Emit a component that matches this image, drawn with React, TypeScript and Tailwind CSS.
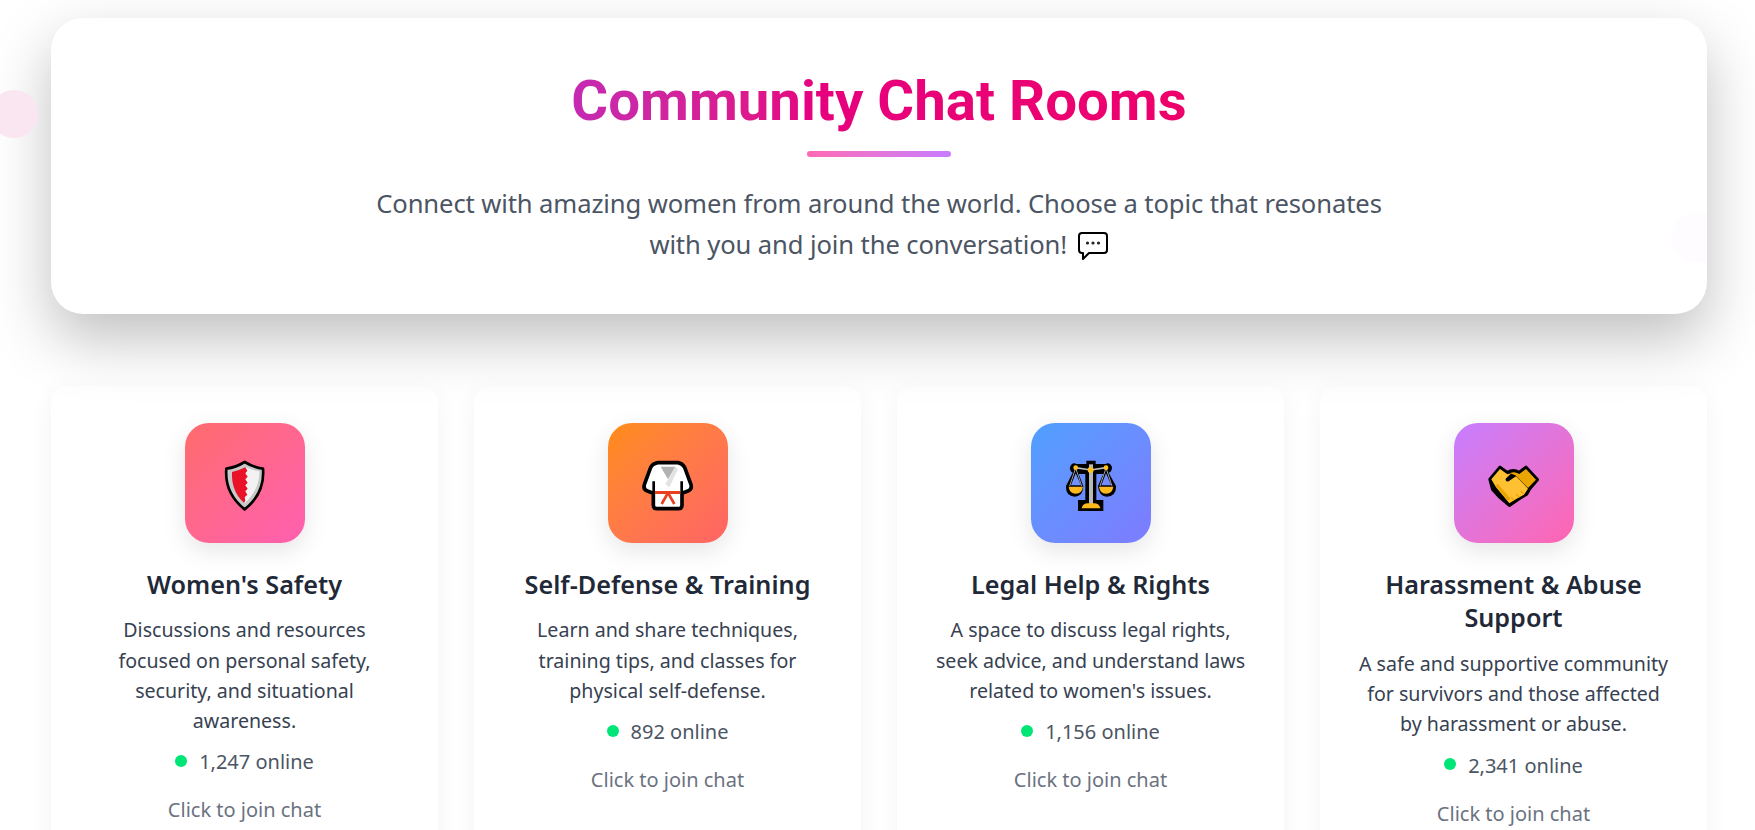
import React from "react";

const rooms = [
  {
    title: "Women's Safety",
    desc: "Discussions and resources focused on personal safety, security, and situational awareness.",
    online: "1,247",
    tile: "bg-gradient-to-br from-[#ff6b6b] to-[#ff5fb0]",
    icon: <ShieldIcon />,
  },
  {
    title: "Self-Defense & Training",
    desc: "Learn and share techniques, training tips, and classes for physical self-defense.",
    online: "892",
    tile: "bg-gradient-to-br from-[#ff8c0f] to-[#ff6464]",
    icon: <GiIcon />,
  },
  {
    title: "Legal Help & Rights",
    desc: "A space to discuss legal rights, seek advice, and understand laws related to women's issues.",
    online: "1,156",
    tile: "bg-gradient-to-br from-[#4d9fff] to-[#7d7bff]",
    icon: <ScalesIcon />,
  },
  {
    title: "Harassment & Abuse Support",
    desc: "A safe and supportive community for survivors and those affected by harassment or abuse.",
    online: "2,341",
    tile: "bg-gradient-to-br from-[#c77dff] to-[#ff64b0]",
    icon: <HandshakeIcon />,
  },
];

function ShieldIcon() {
  return (
    <svg viewBox="45 39 360 360" className="h-full w-full">
      <path d="M224 156Q250 172 279 176C283 225 262 268 224 298C186 268 165 225 169 176Q198 172 224 156Z" fill="#c9c9c9" stroke="#000" strokeWidth="8" strokeLinejoin="round" />
      <path d="M226 172Q246 181 268 184C269 222 252 254 224 280Z" fill="#f2f2f2" />
      <path d="M226 172L232 182L226 190L233 200L226 208L233 218L226 226L233 236L226 244L232 254L224 262L226 272L222 278C198 258 184 226 186 186Q206 182 226 172Z" fill="#ea1226" />
    </svg>
  );
}

function GiIcon() {
  return (
    <svg viewBox="40 39 360 360" className="h-full w-full">
      <path d="M190 158H250Q263 160 270 172L289 224Q293 238 280 243L262 250V286Q262 296 252 296H186Q176 296 176 286V250L158 243Q145 238 149 224L168 172Q175 160 190 158Z" fill="#fff" stroke="#000" strokeWidth="11" strokeLinejoin="round" />
      <path d="M198 170H242L220 208Z" fill="#b2b2b2" />
      <path d="M243 170L250 178L224 232L212 222Z" fill="#e2e2e2" />
      <path d="M177 214V250M261 214V250" stroke="#000" strokeWidth="8" />
      <rect x="181" y="243" width="76" height="9" fill="#e8401c" />
      <path d="M219 250L201 282M221 250L239 282" stroke="#e8401c" strokeWidth="8" />
    </svg>
  );
}

function ScalesIcon() {
  return (
    <svg viewBox="45 39 360 360" className="h-full w-full">
      <path d="M211 152H239V162H268Q282 154 288 172Q288 186 278 188L300 228Q302 258 272 260Q248 258 246 228L262 192H241V270H262V303H186V270H208V192H188L202 228Q202 258 176 260Q148 258 150 228L170 188Q160 184 162 172Q168 154 182 162H211Z" fill="#000" />
      <path d="M179 190L165 226H195Z" fill="#6f92ff" />
      <path d="M270 190L256 226H286Z" fill="#7589ff" />
      <path d="M179 174L161 228M179 174L197 228M270 174L252 228M270 174L288 228" stroke="#b9b9b9" strokeWidth="2.5" />
      <rect x="219" y="163" width="12" height="122" fill="#b9b9b9" />
      <path d="M178 173L224 180L270 173" stroke="#b9b9b9" strokeWidth="5" fill="none" />
      <circle cx="179" cy="173" r="7" fill="#ffc022" />
      <circle cx="270" cy="173" r="7" fill="#ffc022" />
      <circle cx="224" cy="180" r="9" fill="#ffc022" />
      <path d="M158 230H201Q198 251 179 251Q161 251 158 230Z" fill="#ffb81c" />
      <path d="M249 230H292Q289 251 270 251Q252 251 249 230Z" fill="#ffb81c" />
      <path d="M197 295Q200 280 216 280H234Q250 280 253 295Z" fill="#ffb81c" />
    </svg>
  );
}

function HandshakeIcon() {
  return (
    <svg viewBox="40 39 360 360" className="h-full w-full">
      <path d="M178 172L200 188Q218 176 235 188L256 172L290 209L267 236L258 252L232 268L206 286L178 262L156 238L148 208Z" fill="#000" stroke="#000" strokeWidth="10" strokeLinejoin="round" />
      <path d="M256 177L286 209L262 234L224 196L208 190Q220 182 236 192Z" fill="#eba500" />
      <path d="M178 177L152 208L166 232L186 256L206 280L228 266L250 254L262 236L226 199L204 214Q193 216 195 206L212 190L200 193Z" fill="#ffc132" />
      <path d="M163 226L202 272L210 266L172 222Z" fill="#eba500" />
      <path d="M212 262L220 271M226 252L236 262M240 243L249 252" stroke="#eba500" strokeWidth="4" />
    </svg>
  );
}

function BubbleIcon() {
  return (
    <svg viewBox="0 0 32 30" className="ml-[3px] inline-block h-[30px] w-[32px] align-[-7px]">
      <path d="M5 2H27Q30 2 30 5V19Q30 22 27 22H12L6 28V22H5Q2 22 2 19V5Q2 2 5 2Z" fill="#fff" stroke="#000" strokeWidth="2" strokeLinejoin="round" />
      <circle cx="10.5" cy="12" r="1.6" fill="#222" />
      <circle cx="16" cy="12" r="1.6" fill="#222" />
      <circle cx="21.5" cy="12" r="1.6" fill="#222" />
    </svg>
  );
}

function RoomCard({ room }: { room: (typeof rooms)[number] }) {
  return (
    <div className="flex flex-col items-center rounded-2xl bg-white px-[37px] pb-10 pt-[37px] text-center shadow-[0_6px_24px_rgba(0,0,0,0.05)]">
      <div className={"h-[120px] w-[120px] rounded-3xl shadow-[0_8px_24px_rgba(0,0,0,0.1)] " + room.tile}>{room.icon}</div>
      <h3 className="mt-[25px] text-[25.2px] font-semibold leading-[33.6px] text-[#1f2937]">{room.title}</h3>
      <p className="mt-[14px] text-[19.6px] leading-[30.2px] text-[#374151]">{room.desc}</p>
      <div className="mt-[9px] flex items-center justify-center gap-3 text-[20px] leading-[34px] text-[#4b5563]">
        <span className="mb-[3px] h-3 w-3 rounded-full bg-[#00e676]" />
        <span>{room.online} online</span>
      </div>
      <div className="mt-[14px] text-[20px] leading-[34px] text-[#6b7280]">Click to join chat</div>
    </div>
  );
}

export default function App() {
  return (
    <div className="relative h-[830px] overflow-hidden bg-white font-['Noto_Sans',sans-serif]">
      <div className="pl-[51px] pr-[48px] pt-[18px]">
        <div className="relative rounded-[32px] bg-white pb-[48px] pt-[45px] text-center shadow-[0_25px_60px_rgba(0,0,0,0.25)]">
          <div className="absolute inset-0 overflow-hidden rounded-[32px]">
            <div className="absolute right-[-24px] top-[194px] h-[50px] w-[60px] rounded-full bg-[#c77dff]/[0.02]" />
          </div>
          <h1 className="relative mx-auto w-fit bg-gradient-to-r from-[#c42ab2] via-[#e6007e] via-40% to-[#ee006a] bg-clip-text font-['Roboto',sans-serif] text-[56.4px] font-bold leading-[76px] text-transparent">
            Community Chat Rooms
          </h1>
          <div className="relative mx-auto mt-[12px] h-1.5 w-[144px] rounded-full bg-gradient-to-r from-[#ff69b4] to-[#c77dff]" />
          <p className="relative mx-auto mt-[26px] max-w-[1040px] text-[25.6px] leading-[41.4px] tracking-[-0.11px] text-[#4b5563]">
            Connect with amazing women from around the world. Choose a topic that resonates
            <br />
            with you and join the conversation! <BubbleIcon />
          </p>
        </div>
        <div className="mt-[72px] grid grid-cols-4 gap-9">
          {rooms.map((room) => (
            <RoomCard key={room.title} room={room} />
          ))}
        </div>
      </div>
      <div className="absolute left-[-10px] top-[90px] h-12 w-12 rounded-full bg-[#fae6f1]" />
    </div>
  );
}
